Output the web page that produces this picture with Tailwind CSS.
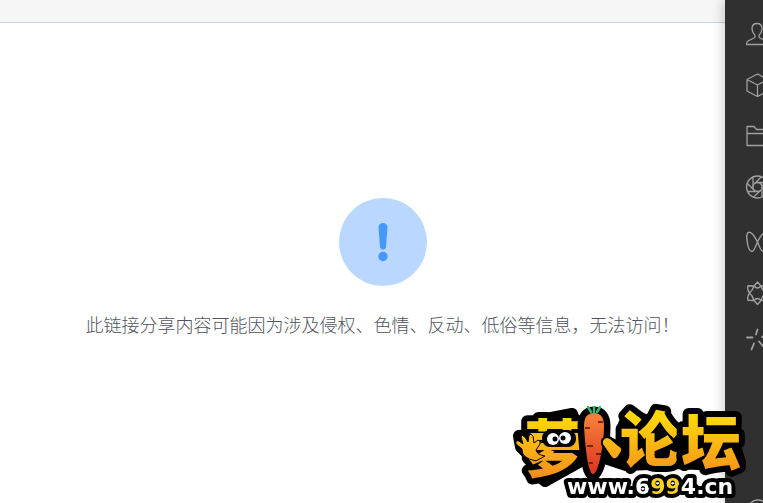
<!DOCTYPE html>
<html lang="zh-CN">
<head>
    <meta charset="UTF-8">
    <meta name="viewport" content="width=device-width, initial-scale=1">
    <title>无法访问</title>
    <script src="https://cdn.jsdelivr.net/npm/@tailwindcss/browser@4"></script>
</head>
<body class="bg-white font-['Noto_Sans_CJK_SC',sans-serif] overflow-hidden">
    <div class="flex h-screen">
        <!-- Page -->
        <div class="flex-1 min-w-0 flex flex-col">
            <header class="h-[23px] shrink-0 bg-[#f6f6f6] border-b border-[#c3d3ea]"></header>
            <main class="flex-1 flex flex-col items-center pt-[175px] pl-10">
                <svg class="size-[88px]" viewBox="0 0 88 88" aria-hidden="true">
                    <circle cx="44" cy="44" r="44" fill="#bad8ff"/>
                    <path d="M39.5 29.5a4.5 4.5 0 0 1 9 0L47 48.5a3 3 0 0 1-6 0z" fill="#4598fc"/>
                    <circle cx="44" cy="58.500" r="4.700" fill="#4598fc"/>
                </svg>
                <p class="mt-6 text-lg font-light text-[#50545c] whitespace-nowrap">此链接分享内容可能因为涉及侵权、色情、反动、低俗等信息，无法访问！</p>
            </main>
        </div>

        <!-- Sidebar -->
        <aside class="w-[38px] shrink-0 bg-[#303030] shadow-[-3px_0_10px_rgba(0,0,0,0.16)]">
            <nav class="h-full overflow-hidden flex flex-col pl-5 pt-[22px] text-[#a0a0a0]">
                <div class="flex flex-col gap-[27px]">
                    <a href="#" aria-label="联系人">
                        <svg class="size-6 max-w-none" viewBox="0 0 24 24" fill="none" stroke="currentColor" stroke-width="1.300" stroke-linejoin="round"><path d="M12 1.500c-3 0-5 2-5 5.200 0 3 1.500 4.800 2.700 6.300.7 1 .5 2.300-.7 3L3 19c-1.200.6-1.500 1.700-1.500 3.500h21c0-1.800-.3-2.900-1.500-3.500l-6-3c-1.200-.7-1.400-2-.7-3 1.200-1.500 2.700-3.300 2.700-6.300 0-3.200-2-5.200-5-5.200z"/></svg>
                    </a>
                    <a href="#" aria-label="收藏">
                        <svg class="size-6 max-w-none" viewBox="0 0 24 24" fill="none" stroke="currentColor" stroke-width="1.300" stroke-linejoin="round"><path d="M12.500 1 22.500 6.500v11.500L12.500 23.500 2 18V6.500zM2 6.500l10.500 5.500 10-5.500M12.500 12v11.500"/></svg>
                    </a>
                    <a href="#" aria-label="文件">
                        <svg class="size-6 max-w-none" viewBox="0 0 24 24" fill="none" stroke="currentColor" stroke-width="1.300" stroke-linejoin="round"><path d="M2 2.500h7l2.500 3H23v16H2zM2 9.500h21"/></svg>
                    </a>
                    <a href="#" aria-label="朋友圈">
                        <svg class="size-6 max-w-none" viewBox="0 0 24 24" fill="none" stroke="currentColor" stroke-width="1.300"><circle cx="12.500" cy="12" r="11"/><circle cx="12.500" cy="12" r="4.500"/><path d="M8 12V2M9.300 8.800l7.200-7M12.500 7.500h10M15.700 8.800l7.200 7M17 12v10M15.700 15.200l-7.200 7M12.500 16.500h-10M9.300 15.200l-7.200-7"/></svg>
                    </a>
                </div>
                <div class="mt-[31px] flex flex-col gap-[27px]">
                    <a href="#" aria-label="视频号">
                        <svg class="size-6 max-w-none" viewBox="0 0 24 24" fill="none" stroke="currentColor" stroke-width="1.400" stroke-linejoin="round"><path d="M12.500 12C10 7 6.500 2 4 2.300 1.500 2.600 1.500 6 2 10c.5 5 2 11.500 5 11.500 2 0 4-5.500 5.500-9.500C15 7 18.500 2 21 2.300c2.500.3 2.500 3.700 2 7.700-.5 5-2 11.500-5 11.500-2 0-4-5.500-5.500-9.500z"/></svg>
                    </a>
                    <a href="#" aria-label="看一看">
                        <svg class="size-6 max-w-none" viewBox="0 0 24 24" fill="none" stroke="currentColor" stroke-width="1.400" stroke-linejoin="round"><path d="M12.500 1 16 5q-3.500 4-7 0zM12.500 23.500 16 19.500q-3.500-4-7 0zM9 5 3 4.800Q2 8.500 4.500 12 2 15.500 3 19.200l6 .3M16 5l6-.2Q23 8.500 20.500 12q2.500 3.500 1.500 7.200l-6 .3M4.500 12q3-2.500 4.500-7M4.500 12q3 2.500 4.500 7.500M20.500 12q-3-2.500-4.500-7M20.500 12q-3 2.500-4.500 7.500"/></svg>
                    </a>
                </div>
                <a href="#" class="mt-[23px]" aria-label="搜一搜">
                    <svg class="size-6 max-w-none" viewBox="0 0 24 24" fill="none" stroke="currentColor" stroke-width="1.800" stroke-linecap="round"><path d="M11 6.500 12.500 1.500M7.500 9.500H2M9 15.500l-2.500 6M14 13.500l7 8M17 9l5-3"/></svg>
                </a>
                <a href="#" class="mt-auto -mb-5" aria-label="小程序">
                    <svg class="size-6 max-w-none" viewBox="0 0 24 24" fill="none" stroke="currentColor" stroke-width="1.300"><circle cx="13" cy="11" r="10"/></svg>
                </a>
            </nav>
        </aside>
    </div>

    <!-- Forum logo, floats over the corner -->
    <a href="#" class="fixed right-0 bottom-0" aria-label="萝卜论坛 www.6994.cn">
        <svg class="w-[253px] h-[123px]" viewBox="510 380 253 123">
            <defs>
                <linearGradient id="gold" gradientUnits="userSpaceOnUse" x1="0" y1="412" x2="0" y2="478">
                    <stop offset="0.100" stop-color="#ffd60a"/>
                    <stop offset="1" stop-color="#f68d1c"/>
                </linearGradient>
                <linearGradient id="carrot" x1="0" y1="0" x2="0" y2="1">
                    <stop offset="0" stop-color="#f9843a"/>
                    <stop offset="1" stop-color="#dc3420"/>
                </linearGradient>
            </defs>

            <!-- black backing -->
            <g fill="#000" stroke="#000" stroke-width="12" stroke-linejoin="round" stroke-linecap="round">
                <path d="M536 421 572 414l6 14 1 34-34 19-6-5 6-8-8-5-16-16-2-11 10-1 6-8z"/>
                <path d="M606 441l14 8 4-25 14-7 14 6 6-4 18 18 8-8 50-2 2 22 4 14-14 2-54-2-46 2-18-6z"/>
            </g>

            <g font-family="'Noto Sans CJK SC', sans-serif" font-weight="900" fill="url(#gold)" stroke="#000" stroke-width="12" stroke-linejoin="round" paint-order="stroke">
                <text x="524" y="472" font-size="62">萝</text>
                <text x="620" y="462" font-size="60">论</text>
                <text x="681" y="465" font-size="60">坛</text>
            </g>

            <!-- waving hand -->
            <path d="M536 461q-15-3-14-12l-6-5q-1-4 3-3l4 3-2-7q1-3 4 0l3 5 1-7q2-2 4 1l1 7 4-3q3 0 2 4l-4 6q1 5 9 6z" fill="url(#gold)" stroke="#000" stroke-width="1"/>

            <!-- eyes -->
            <rect x="542" y="430" width="34" height="17" rx="8" fill="#000"/>
            <circle cx="553" cy="439" r="6" fill="#fff"/>
            <circle cx="565" cy="438" r="6" fill="#fff"/>
            <circle cx="555" cy="439" r="2.500"/>
            <circle cx="563" cy="438" r="2.500"/>

            <!-- carrot -->
            <path d="M594 413c-7 0-10 5-10 13 1 20 4 48 9 48s11-28 11-48c0-8-3-13-10-13z" fill="url(#carrot)" stroke="#000" stroke-width="13" paint-order="stroke"/>
            <path d="M594 413v-6M591 412l-3-5M597 412l3-5" stroke="#36b878" stroke-width="2.500" stroke-linecap="round"/>
            <path d="M585 428h5M598 422h5M587 446h6M596 454h5M589 463h4" stroke="#48150c" stroke-width="1.500"/>
            <path d="M607 438q-5 1-4 6l9 13q3 3 6-1l3-5q1-3-3-5l-8-7z" fill="url(#gold)" stroke="#000" stroke-width="4" stroke-linejoin="round" paint-order="stroke"/>

            <text x="567" y="494" font-family="'DejaVu Sans', sans-serif" font-weight="700" font-size="22" fill="#fff" stroke="#000" stroke-width="8" stroke-linejoin="round" paint-order="stroke">www.6<tspan fill="#ffd21c">99</tspan>4.cn</text>
        </svg>
    </a>
</body>
</html>
